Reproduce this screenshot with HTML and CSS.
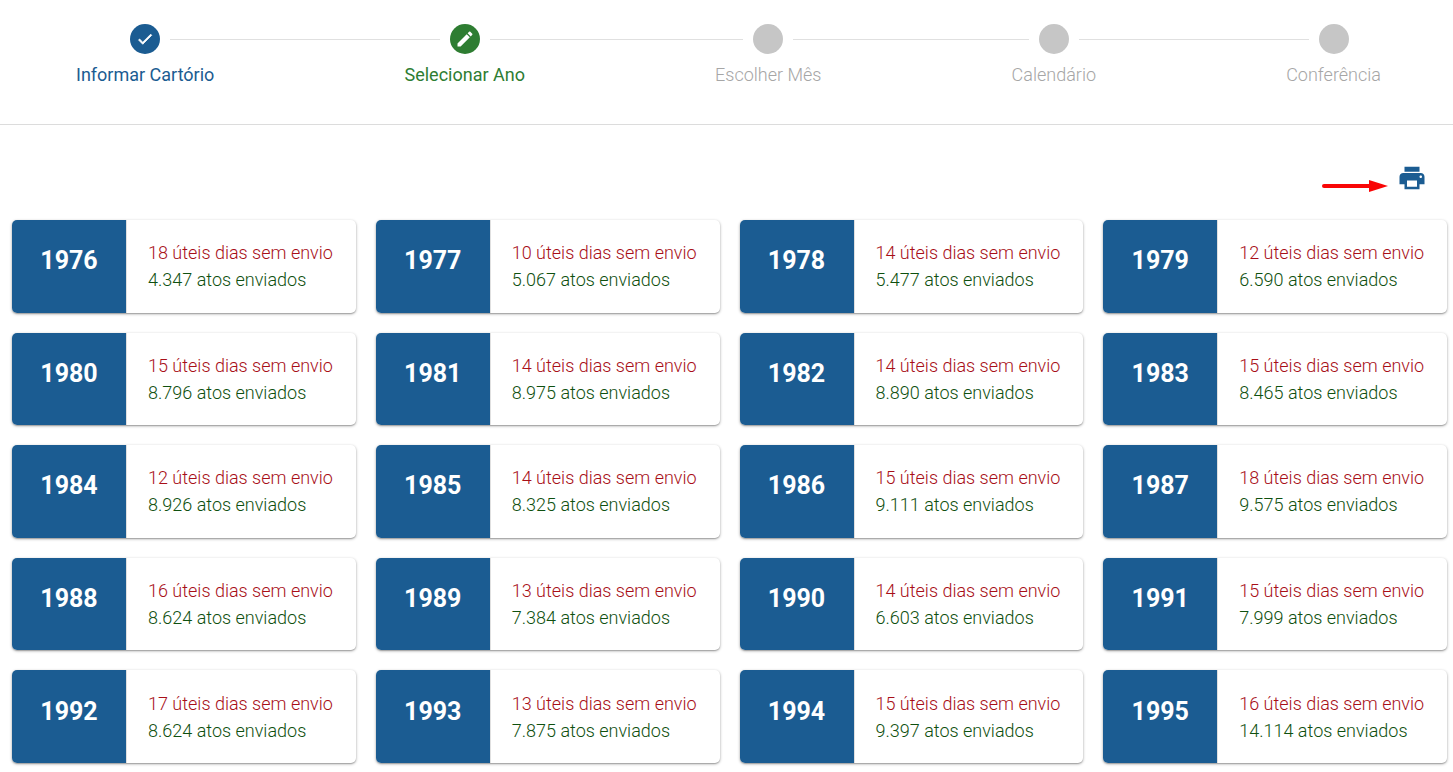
FILE: index.html
```
<!DOCTYPE html>
<html lang="pt-BR">
<head>
  <meta charset="UTF-8">
  <meta name="viewport" content="width=device-width, initial-scale=1.0">
  <title>Selecionar Ano</title>
  <link rel="stylesheet" href="styles.css">
</head>
<body>
  <ol class="stepper">
    <li class="step done">
      <div class="marker">
        <span class="circle">
          <svg viewBox="0 0 24 24"><path d="M9 16.2L4.8 12l-1.4 1.4L9 19 21 7l-1.4-1.4L9 16.2z"/></svg>
        </span>
      </div>
      <span class="label">Informar Cartório</span>
    </li>
    <li class="connector"></li>
    <li class="step current">
      <div class="marker">
        <span class="circle">
          <svg viewBox="0 0 24 24"><path d="M3 17.25V21h3.75L17.81 9.94l-3.75-3.75L3 17.25zM20.71 7.04c.39-.39.39-1.02 0-1.41l-2.34-2.34c-.39-.39-1.02-.39-1.41 0l-1.83 1.83 3.75 3.75 1.83-1.83z"/></svg>
        </span>
      </div>
      <span class="label">Selecionar Ano</span>
    </li>
    <li class="connector"></li>
    <li class="step">
      <div class="marker"><span class="circle"></span></div>
      <span class="label">Escolher Mês</span>
    </li>
    <li class="connector"></li>
    <li class="step">
      <div class="marker"><span class="circle"></span></div>
      <span class="label">Calendário</span>
    </li>
    <li class="connector"></li>
    <li class="step">
      <div class="marker"><span class="circle"></span></div>
      <span class="label">Conferência</span>
    </li>
  </ol>

  <div class="toolbar">
    <svg class="arrow" viewBox="0 0 68 14">
      <path d="M3 7H50" stroke="#f90606" stroke-width="4" stroke-linecap="round"/>
      <path d="M48 1L67 7L48 13z" fill="#f90606"/>
    </svg>
    <button class="print-btn" type="button" aria-label="Imprimir">
      <svg viewBox="0 0 24 24"><path d="M19 8H5c-1.66 0-3 1.34-3 3v6h4v4h12v-4h4v-6c0-1.66-1.34-3-3-3zm-3 11H8v-5h8v5zm3-7c-.55 0-1-.45-1-1s.45-1 1-1 1 .45 1 1-.45 1-1 1zm-1-9H6v4h12V3z"/></svg>
    </button>
  </div>

  <main class="years">
    <a class="card" href="#1976"><span class="year">1976</span><span class="info"><span class="missing">18 úteis dias sem envio</span><span class="sent">4.347 atos enviados</span></span></a>
    <a class="card" href="#1977"><span class="year">1977</span><span class="info"><span class="missing">10 úteis dias sem envio</span><span class="sent">5.067 atos enviados</span></span></a>
    <a class="card" href="#1978"><span class="year">1978</span><span class="info"><span class="missing">14 úteis dias sem envio</span><span class="sent">5.477 atos enviados</span></span></a>
    <a class="card" href="#1979"><span class="year">1979</span><span class="info"><span class="missing">12 úteis dias sem envio</span><span class="sent">6.590 atos enviados</span></span></a>

    <a class="card" href="#1980"><span class="year">1980</span><span class="info"><span class="missing">15 úteis dias sem envio</span><span class="sent">8.796 atos enviados</span></span></a>
    <a class="card" href="#1981"><span class="year">1981</span><span class="info"><span class="missing">14 úteis dias sem envio</span><span class="sent">8.975 atos enviados</span></span></a>
    <a class="card" href="#1982"><span class="year">1982</span><span class="info"><span class="missing">14 úteis dias sem envio</span><span class="sent">8.890 atos enviados</span></span></a>
    <a class="card" href="#1983"><span class="year">1983</span><span class="info"><span class="missing">15 úteis dias sem envio</span><span class="sent">8.465 atos enviados</span></span></a>

    <a class="card" href="#1984"><span class="year">1984</span><span class="info"><span class="missing">12 úteis dias sem envio</span><span class="sent">8.926 atos enviados</span></span></a>
    <a class="card" href="#1985"><span class="year">1985</span><span class="info"><span class="missing">14 úteis dias sem envio</span><span class="sent">8.325 atos enviados</span></span></a>
    <a class="card" href="#1986"><span class="year">1986</span><span class="info"><span class="missing">15 úteis dias sem envio</span><span class="sent">9.111 atos enviados</span></span></a>
    <a class="card" href="#1987"><span class="year">1987</span><span class="info"><span class="missing">18 úteis dias sem envio</span><span class="sent">9.575 atos enviados</span></span></a>

    <a class="card" href="#1988"><span class="year">1988</span><span class="info"><span class="missing">16 úteis dias sem envio</span><span class="sent">8.624 atos enviados</span></span></a>
    <a class="card" href="#1989"><span class="year">1989</span><span class="info"><span class="missing">13 úteis dias sem envio</span><span class="sent">7.384 atos enviados</span></span></a>
    <a class="card" href="#1990"><span class="year">1990</span><span class="info"><span class="missing">14 úteis dias sem envio</span><span class="sent">6.603 atos enviados</span></span></a>
    <a class="card" href="#1991"><span class="year">1991</span><span class="info"><span class="missing">15 úteis dias sem envio</span><span class="sent">7.999 atos enviados</span></span></a>

    <a class="card" href="#1992"><span class="year">1992</span><span class="info"><span class="missing">17 úteis dias sem envio</span><span class="sent">8.624 atos enviados</span></span></a>
    <a class="card" href="#1993"><span class="year">1993</span><span class="info"><span class="missing">13 úteis dias sem envio</span><span class="sent">7.875 atos enviados</span></span></a>
    <a class="card" href="#1994"><span class="year">1994</span><span class="info"><span class="missing">15 úteis dias sem envio</span><span class="sent">9.397 atos enviados</span></span></a>
    <a class="card" href="#1995"><span class="year">1995</span><span class="info"><span class="missing">16 úteis dias sem envio</span><span class="sent">14.114 atos enviados</span></span></a>
  </main>
</body>
</html>
```
FILE: styles.css
```
* {
  margin: 0;
  padding: 0;
  box-sizing: border-box;
}

body {
  min-height: 100vh;
  display: flex;
  flex-direction: column;
  font-family: Roboto, sans-serif;
  font-size: 18px;
  background: #fff;
}

/* Stepper */
.stepper {
  display: flex;
  list-style: none;
  padding: 24px 24px 36px 28px;
  border-bottom: 1px solid #dcdcdc;
}

.step {
  display: flex;
  flex-direction: column;
  color: #a6a6a6;
  font-weight: 300;
}

.marker {
  display: flex;
  align-items: center;
  gap: 10px;
}

.marker::before,
.marker::after {
  content: "";
  flex: 1;
  height: 1px;
  background: #e0e0e0;
}

.step:first-child .marker::before,
.step:last-child .marker::after {
  background: none;
}

.circle {
  display: flex;
  align-items: center;
  justify-content: center;
  width: 30px;
  height: 30px;
  border-radius: 50%;
  background: #c6c6c6;
}

.circle svg {
  width: 18px;
  height: 18px;
  fill: #fff;
}

.done .circle svg {
  stroke: #fff;
  stroke-width: 1;
}

.label {
  padding: 8px 48px 0;
  line-height: 26px;
  white-space: nowrap;
}

.connector {
  flex: 1;
  height: 1px;
  margin-top: 15px;
  background: #e0e0e0;
}

.done {
  color: #1b5c92;
  font-weight: 400;
}

.done .circle {
  background: #1b5c92;
}

.current {
  color: #2e7d32;
  font-weight: 400;
}

.current .circle {
  background: #2e7d32;
}

.current .circle svg {
  width: 20px;
  height: 20px;
}

/* Toolbar */
.toolbar {
  display: flex;
  justify-content: flex-end;
  align-items: flex-end;
  gap: 8px;
  padding: 38px 26px 27px;
}

.arrow {
  width: 68px;
  height: 14px;
}

.print-btn {
  width: 30px;
  height: 30px;
  border: none;
  background: none;
  cursor: pointer;
}

.print-btn svg {
  display: block;
  fill: #1b5c92;
}

/* Year cards */
.years {
  flex: 1;
  display: grid;
  grid-template-columns: repeat(4, 1fr);
  grid-auto-rows: 1fr;
  gap: 20px;
  padding: 0 6px 9px 12px;
}

.card {
  display: flex;
  border-radius: 5px;
  overflow: hidden;
  text-decoration: none;
  background: #fff;
  box-shadow: 0 1px 3px rgba(0, 0, 0, 0.35), 0 1px 1px rgba(0, 0, 0, 0.15);
}

.year {
  flex: 0 0 114px;
  display: flex;
  align-items: center;
  justify-content: center;
  padding-bottom: 11px;
  background: #1b5c92;
  color: #fff;
  font-size: 25px;
  font-weight: 700;
}

.info {
  flex: 1;
  display: flex;
  flex-direction: column;
  justify-content: center;
  padding-left: 21px;
  border-left: 1px solid #e0e0e0;
  font-weight: 300;
  line-height: 27px;
  white-space: nowrap;
}

.missing {
  color: #a80f18;
}

.sent {
  color: #0f500f;
}
```
